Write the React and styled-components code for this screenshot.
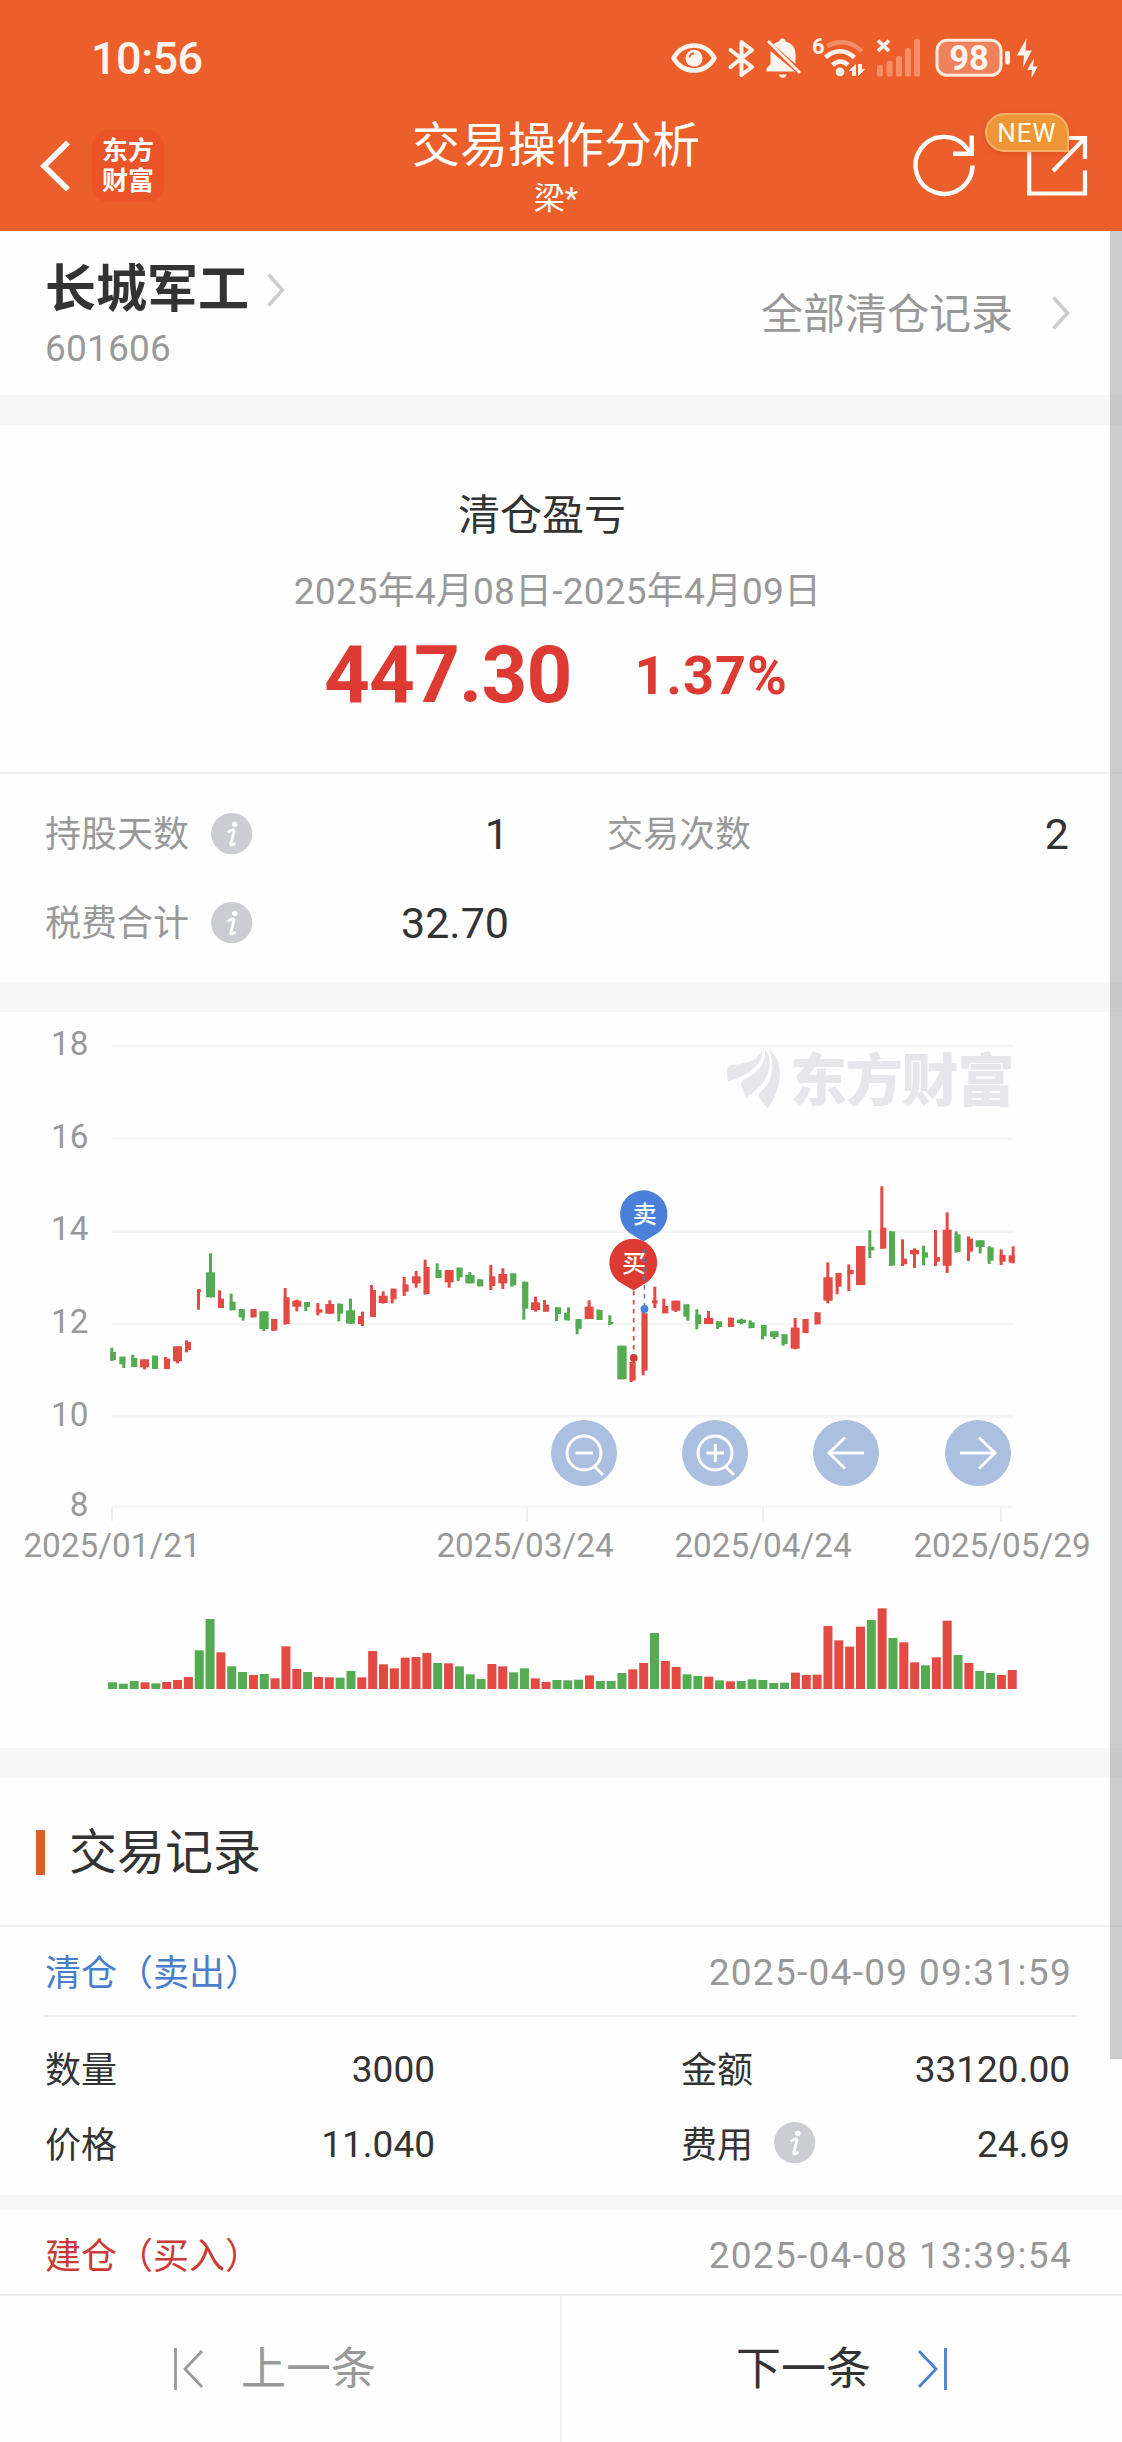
import styled, { createGlobalStyle } from "styled-components";

const GREEN = "#55ab51";
const RED = "#e24a43";

// [direction, body left, body right, body top, body bottom, wick x, high, low]
const candleGroups = [
  {
    x: 270,
    y: 444,
    candles: [
      ["G", 61, 78, 576, 600, 61, 563, 603],
      ["G", 88, 106, 590, 613, 97, 590, 624],
      ["G", 124, 142, 594, 621, 124, 584, 621],
      ["R", 150, 177, 598, 622, 159, 598, 628],
      ["G", 186, 204, 587, 627, 186, 587, 627],
      ["R", 222, 240, 596, 627, 222, 591, 627],
      ["R", 249, 276, 559, 604, 258, 559, 610],
      ["R", 285, 303, 546, 570, 285, 541, 577],
      ["R", 321, 333, 388, 396, 321, 388, 449],
      ["G", 348, 375, 337, 412, 357, 280, 412],
      ["R", 384, 402, 416, 444, 384, 391, 444],
      ["G", 419, 437, 425, 451, 419, 401, 451],
      ["G", 446, 464, 447, 472, 455, 447, 482],
      ["R", 482, 500, 447, 472, 482, 447, 472],
      ["G", 508, 536, 454, 507, 517, 454, 513],
      ["R", 544, 562, 477, 512, 544, 477, 512],
      ["R", 581, 599, 412, 492, 581, 384, 494],
      ["R", 607, 634, 422, 440, 616, 419, 454],
      ["G", 643, 660, 426, 441, 643, 426, 453],
      ["R", 679, 697, 448, 458, 679, 429, 466],
      ["R", 706, 733, 432, 461, 715, 421, 461],
      ["G", 742, 759, 431, 461, 742, 431, 484],
      ["G", 768, 795, 451, 491, 777, 416, 491],
      ["R", 804, 822, 468, 492, 813, 455, 498],
      ["R", 840, 858, 390, 471, 840, 375, 471],
      ["R", 866, 893, 407, 429, 875, 394, 431],
    ],
  },
  {
    x: 1140,
    y: 444,
    candles: [
      ["R", 32, 50, 386, 418, 32, 386, 430],
      ["R", 68, 86, 373, 395, 68, 351, 408],
      ["R", 96, 122, 349, 370, 104, 333, 383],
      ["R", 131, 149, 321, 402, 131, 299, 404],
      ["G", 167, 185, 330, 354, 167, 310, 354],
      ["R", 194, 221, 330, 367, 203, 330, 383],
      ["G", 230, 248, 323, 352, 230, 323, 363],
      ["G", 256, 284, 345, 370, 265, 336, 370],
      ["G", 292, 310, 358, 379, 292, 358, 379],
      ["R", 328, 346, 349, 378, 328, 315, 390],
      ["R", 355, 382, 342, 370, 364, 325, 387],
      ["G", 391, 409, 340, 376, 391, 340, 380],
      ["G", 427, 445, 365, 446, 427, 365, 479],
      ["R", 453, 480, 427, 450, 462, 410, 455],
      ["R", 489, 507, 434, 455, 489, 420, 455],
      ["G", 525, 543, 442, 462, 525, 442, 483],
      ["G", 552, 570, 458, 481, 561, 442, 481],
      ["G", 587, 605, 477, 507, 587, 477, 523],
      ["R", 614, 641, 440, 477, 623, 421, 477],
      ["G", 650, 668, 450, 480, 650, 448, 480],
      ["G", 685, 700, 486, 492, 685, 466, 495],
      ["G", 712, 740, 557, 658, 721, 557, 658],
      ["R", 749, 767, 606, 662, 749, 606, 666],
      ["R", 785, 803, 460, 632, 785, 455, 646],
      ["R", 816, 833, 421, 430, 820, 380, 444],
      ["R", 847, 865, 438, 460, 847, 416, 460],
    ],
  },
  {
    x: 2010,
    y: 24,
    candles: [
      ["R", 4, 31, 842, 872, 13, 842, 876],
      ["G", 40, 58, 853, 890, 49, 853, 902],
      ["G", 76, 94, 884, 912, 76, 868, 928],
      ["R", 102, 130, 894, 912, 111, 873, 912],
      ["G", 138, 156, 904, 921, 138, 904, 927],
      ["R", 174, 192, 893, 921, 174, 893, 921],
      ["G", 201, 228, 899, 909, 210, 896, 913],
      ["G", 236, 254, 907, 924, 236, 901, 925],
      ["G", 273, 290, 915, 949, 273, 915, 958],
      ["G", 300, 326, 934, 951, 308, 934, 957],
      ["G", 335, 353, 943, 972, 335, 943, 977],
      ["R", 362, 389, 923, 986, 371, 894, 988],
      ["R", 398, 416, 897, 939, 398, 897, 939],
      ["R", 434, 452, 877, 913, 434, 877, 913],
      ["R", 460, 488, 772, 842, 469, 727, 850],
      ["R", 497, 515, 759, 800, 497, 759, 823],
      ["R", 532, 551, 750, 762, 532, 733, 813],
      ["R", 558, 586, 678, 795, 567, 678, 795],
      ["G", 595, 613, 680, 691, 595, 631, 714],
      ["R", 631, 649, 623, 686, 631, 499, 686],
      ["G", 657, 675, 634, 737, 657, 634, 737],
      ["R", 693, 711, 716, 733, 693, 658, 738],
      ["R", 720, 747, 690, 703, 729, 685, 744],
      ["G", 756, 774, 697, 713, 756, 677, 736],
      ["R", 792, 810, 711, 725, 792, 630, 738],
      ["R", 818, 845, 629, 737, 827, 577, 759],
      ["G", 854, 872, 643, 696, 854, 634, 698],
      ["R", 891, 909, 656, 695, 891, 649, 723],
      ["G", 917, 944, 661, 681, 926, 661, 700],
      ["G", 953, 971, 682, 722, 953, 679, 732],
      ["R", 989, 1007, 705, 725, 989, 688, 735],
      ["R", 1016, 1034, 706, 728, 1025, 679, 730],
    ],
  },
];

const volumes =
  "G20 G16 G24 R20 G17 R21 R27 R36 G116 G210 R110 G68 G51 R42 G45 R32 R128 R60 G51 R36 R35 G34 G54 R35 " +
  "R114 R74 R62 R94 R96 R108 G78 R77 G68 G44 G30 R75 R68 G50 G62 R32 R21 G27 G26 G28 R41 G24 G24 G48 R59 " +
  "R78 G168 R84 R66 G44 G39 R37 G26 R23 G24 G29 G27 G18 G19 R49 R42 R43 R189 R146 R127 R187 G207 R242 " +
  "G153 R140 R80 G71 R95 R205 G102 R78 G54 G48 R42 R57";

const priceLines = [
  { label: "18", y: 34 },
  { label: "16", y: 126.7 },
  { label: "14", y: 219.4 },
  { label: "12", y: 312 },
  { label: "10", y: 404.7 },
  { label: "8", y: 494.7 },
];

const dateTicks = [
  { label: "2025/01/21", tick: 112, x: 112 },
  { label: "2025/03/24", tick: 527, x: 525 },
  { label: "2025/04/24", tick: 763, x: 763 },
  { label: "2025/05/29", tick: 1001, x: 1002 },
];

const BackIcon = () => (
  <svg width="46" height="60" viewBox="36 136 46 60" fill="none">
    <path d="M68 142.5 44 166l24 23.5" stroke="#fff" strokeWidth="5.5" />
  </svg>
);

const RefreshIcon = () => (
  <svg width="72" height="72" viewBox="908 130 72 72" fill="none">
    <path
      d="M972.5 165.5a28.5 28.5 0 1 1-5.5-17l5 6"
      stroke="#fff"
      strokeWidth="4.4"
    />
    <path d="M971.7 135.500v18.300h-18.500" stroke="#fff" strokeWidth="4.400" />
  </svg>
);

const ShareIcon = () => (
  <svg width="72" height="72" viewBox="1020 130 72 72" fill="none">
    <path
      d="M1050 138h-20.800v55.500h55.800v-23M1062 138h23v21M1053 171l31-32"
      stroke="#fff"
      strokeWidth="4.200"
    />
  </svg>
);

const StatusIcons = () => (
  <>
    <svg width="54" height="44" viewBox="668 36 54 44">
      <path
        d="M673.500 58c5-8.500 12.500-12.500 20.500-12.500s15.500 4 20.500 12.500c-5 8.500-12.500 12.500-20.500 12.500s-15.500-4-20.500-12.500z"
        fill="none"
        stroke="#fff4ee"
        strokeWidth="4.500"
        strokeLinejoin="round"
      />
      <circle cx="694" cy="58.300" r="8.500" fill="#fff4ee" />
      <path
        d="M689.500 57.500a4.500 4.500 0 0 1 4.500-4"
        fill="none"
        stroke="#ed5f2b"
        strokeWidth="1.800"
      />
    </svg>
    <svg width="38" height="44" viewBox="722 36 38 44">
      <path
        d="M730.500 50l21.500 17-10.500 8V42l10.500 8-21.500 17"
        fill="none"
        stroke="#fff4ee"
        strokeWidth="4"
        strokeLinejoin="round"
        strokeLinecap="round"
      />
    </svg>
    <svg width="46" height="44" viewBox="760 36 46 44" fill="#fff4ee">
      <path d="M770.500 51 795 71.500h-28.500v-3l4-4.500z" />
      <path d="M773.500 44.500c2-1.700 3.800-2.700 6-3a3 3 0 0 1 6 0c6.500 1.500 10 6 10 12.500v10z" />
      <path d="M768 41l32 32" stroke="#fff4ee" strokeWidth="2.800" fill="none" />
      <path d="M779 74.500h7.500a3.800 3.800 0 0 1-7.500 0z" />
    </svg>
    <svg width="64" height="60" viewBox="806 28 64 60" fill="none">
      <text
        x="812"
        y="53.500"
        fontSize="22"
        fontWeight="700"
        fontFamily="Roboto"
        fill="#fff4ee"
      >
        6
      </text>
      <g stroke="#fff4ee" strokeWidth="4.500">
        <path d="M827 46c11-6 24-5.500 35 5.500" opacity=".3" />
        <path d="M825.500 57.500c9-8.500 20-8.500 29 0" />
        <path d="M832.500 65c5-4.500 10.500-4.500 15.500 0" />
      </g>
      <circle cx="840" cy="71.800" r="4.400" fill="#fff4ee" />
      <path d="M855.500 64.500v11h-3v-5h-3zM858.500 75.500v-11h3v5h3z" fill="#fff4ee" stroke="#fff4ee" />
    </svg>
    <svg width="58" height="44" viewBox="870 36 58 44">
      <path d="M878 40.500l11 10.500M889 40.500 878 51" stroke="#fff4ee" strokeWidth="3.800" />
      <g fill="#f78d64">
        <rect x="877" y="65" width="6" height="11.500" rx="2" />
        <rect x="886.500" y="61" width="6" height="15.500" rx="2" />
        <rect x="896" y="56" width="6" height="20.500" rx="2" />
        <rect x="905" y="48" width="6" height="28.500" rx="2" />
        <rect x="914" y="39" width="6" height="37.500" rx="2" />
      </g>
    </svg>
    <svg width="86" height="44" viewBox="928 36 86 44">
      <rect
        x="937"
        y="40.300"
        width="64"
        height="35"
        rx="10"
        fill="#f0825b"
        stroke="#ffe9df"
        strokeWidth="3"
      />
      <text
        x="969"
        y="70"
        fontSize="34.500"
        fontWeight="700"
        fontFamily="Roboto"
        textAnchor="middle"
        fill="#fff4ee"
      >
        98
      </text>
      <rect x="1005" y="51" width="5" height="13.500" rx="2" fill="#fff4ee" />
    </svg>
    <svg width="30" height="44" viewBox="1014 36 30 44" fill="#fff4ee">
      <path d="M1026.500 38.500 1017 55.500h7l-1 12 8.800-17h-6.300z" />
      <path d="M1034 58.500l-7 11.500h5l-.5 8 6.300-11.500h-4.800z" />
    </svg>
  </>
);

const ChevronIcon = () => (
  <svg width="18" height="34" viewBox="0 0 18 34" fill="none">
    <path d="M1.500 1.500 15.500 17 1.500 32.500" stroke="#ccc" strokeWidth="3.500" />
  </svg>
);

const InfoIcon = () => (
  <svg width="42" height="42" viewBox="0 0 42 42">
    <circle cx="20.700" cy="20.600" r="20.600" fill="#cccdd2" />
    <circle cx="23.800" cy="11.500" r="2.700" fill="#fff" />
    <path
      d="M16.500 19.500c2-1.500 4-2.500 5.500-2.500 1 0 1.200 1 .9 2L19.800 30.500c-.5 2.500 1.500 2 4.500-.5"
      fill="none"
      stroke="#fff"
      strokeWidth="2.800"
    />
  </svg>
);

const ToolIcon = ({ type }) => (
  <svg width="66" height="66" viewBox="0 0 66 66" fill="none" stroke="#fff" strokeWidth="3">
    {(type === "out" || type === "in") && (
      <>
        <circle cx="33" cy="33" r="17" />
        <path d="M43.500 46.500 52 55M24.500 33h17.500" />
      </>
    )}
    {type === "in" && <path d="M33.300 24v18" />}
    {type === "prev" && <path d="M51 33H17M32 17.500 16 33l16 15.500" />}
    {type === "next" && <path d="M15 33h34M34 17.500 50 33 34 48.500" />}
  </svg>
);

const StepIcon = ({ flip }) => (
  <svg
    width="32"
    height="44"
    viewBox="0 0 32 44"
    fill="none"
    stroke={flip ? "#4a80cc" : "#999"}
    strokeWidth="2.800"
  >
    {flip ? (
      <path d="M3 4l17 18L3 40M29.500 1v42" />
    ) : (
      <path d="M29 4 12 22l17 18M2.500 1v42" />
    )}
  </svg>
);

const Candle = ({ data }) => {
  const [dir, x1, x2, top, bottom, wick, high, low] = data;
  return (
    <g fill={dir === "G" ? GREEN : RED}>
      <rect x={wick} y={high} width="9" height={low - high} />
      <rect x={x1} y={top} width={x2 - x1} height={bottom - top} />
    </g>
  );
};

const PriceChart = () => (
  <ChartSvg width="1122" height="736" viewBox="0 0 1122 736">
    {priceLines.map((line) => (
      <g key={line.label}>
        <rect x="112" y={line.y - 1.500} width="901" height="3" fill="#f6f6f6" />
        <text x="88.500" y={line.y + 9} textAnchor="end">
          {line.label}
        </text>
      </g>
    ))}
    {dateTicks.map((t) => (
      <g key={t.label}>
        <rect x={t.tick - 1} y="495" width="2" height="14" fill="#eee" />
        <text x={t.x} y="545" textAnchor="middle">
          {t.label}
        </text>
      </g>
    ))}

    {/* watermark */}
    <g fill="#e7e6eb">
      <g transform="translate(670 8) scale(.3333)">
        <path d="M174 184c-3-14-3-26-2-36 2-9 8-13 18-14 44-3 76-14 86-44 2 18-4 34-16 46-20 24-46 36-86 48z" />
        <path d="M230 232c-8-12-14-26-17-40 1-8 6-12 16-17 40-20 58-46 57-85 12 12 14 30 12 48-5 40-26 68-68 94z" />
        <path d="M294 266c-10-12-22-24-27-38-1-6 2-9 8-15 34-34 40-76 22-123 24 16 33 42 33 72-1 36-14 70-36 104z" />
      </g>
      <text className="brand" x="790" y="88.500">
        东方财富
      </text>
    </g>

    {candleGroups.map((group) => (
      <g key={group.x} transform={`scale(.33333) translate(${group.x} ${group.y})`}>
        {group.candles.map((c) => (
          <Candle key={c[1]} data={c} />
        ))}
      </g>
    ))}

    {volumes.split(" ").map((v, i) => {
      const h = Number(v.slice(1)) / 3;
      return (
        <rect
          key={i}
          x={108 + i * 10.840}
          y={677 - h}
          width="9"
          height={h}
          fill={v[0] === "G" ? GREEN : RED}
        />
      );
    })}

    {/* sell / buy pins */}
    <path
      d="M643.500 229.500 629.500 221a23.700 23.700 0 1 1 28.500 0z"
      fill="#4a80da"
    />
    <path
      d="M633.700 278.500 618.500 269.500a23.900 23.900 0 1 1 29.500 0z"
      fill="#dc3a32"
    />
    <path d="M633.700 279v64" stroke="#d0524c" strokeWidth="1.800" strokeDasharray="4.500 4.500" />
    <path d="M644.500 237v58" stroke="#5a78c0" strokeWidth="1.500" strokeDasharray="4.500 4.500" />
    <circle cx="633.700" cy="346" r="3.900" fill="#d23c36" />
    <circle cx="644.500" cy="297" r="3.900" fill="#4a80da" />
    <text className="pin" x="644.700" y="211.300">
      卖
    </text>
    <text className="pin" x="634" y="260">
      买
    </text>
  </ChartSvg>
);

const RecordItem = ({ title, time, color, children }) => (
  <Record>
    <RecordHead $color={color}>
      <h3>{title}</h3>
      <time>{time}</time>
    </RecordHead>
    {children}
  </Record>
);

const App = () => {
  return (
    <>
      <GlobalStyle />
      <Screen>
        <Header>
          <StatusBar>
            <Clock>10:56</Clock>
            <StatusRight>
              <StatusIcons />
            </StatusRight>
          </StatusBar>
          <NavBar>
            <NavLeft>
              <BackIcon />
              <AppLogo>
                东方
                <br />
                财富
              </AppLogo>
            </NavLeft>
            <NavTitle>
              <h1>交易操作分析</h1>
              <p>梁*</p>
            </NavTitle>
            <NavRight>
              <RefreshIcon />
              <ShareButton>
                <ShareIcon />
                <NewBadge>NEW</NewBadge>
              </ShareButton>
            </NavRight>
          </NavBar>
        </Header>

        <Content>
          <StockBar>
            <div>
              <StockName>
                长城军工
                <ChevronIcon />
              </StockName>
              <StockCode>601606</StockCode>
            </div>
            <AllRecords>
              <span>全部清仓记录</span>
              <ChevronIcon />
            </AllRecords>
          </StockBar>
          <Band />

          <Profit>
            <ProfitTitle>清仓盈亏</ProfitTitle>
            <ProfitDate>2025年4月08日-2025年4月09日</ProfitDate>
            <ProfitValue>
              <strong>447.30</strong>
              <em>1.37%</em>
            </ProfitValue>
          </Profit>

          <Stats>
            <StatItem>
              <span>持股天数</span>
              <InfoIcon />
              <b>1</b>
            </StatItem>
            <StatItem>
              <span>交易次数</span>
              <b>2</b>
            </StatItem>
            <StatItem>
              <span>税费合计</span>
              <InfoIcon />
              <b>32.70</b>
            </StatItem>
          </Stats>
          <Band />

          <ChartPanel>
            <PriceChart />
            <ChartTools>
              {["out", "in", "prev", "next"].map((type) => (
                <ToolButton key={type}>
                  <ToolIcon type={type} />
                </ToolButton>
              ))}
            </ChartTools>
          </ChartPanel>
          <Band />

          <SectionTitle>交易记录</SectionTitle>
          <RecordItem title="清仓（卖出）" time="2025-04-09 09:31:59" color="#4a7dcb">
            <RecordGrid>
              <RecordCell>
                <span>数量</span>
                <b>3000</b>
              </RecordCell>
              <RecordCell>
                <span>金额</span>
                <b>33120.00</b>
              </RecordCell>
              <RecordCell>
                <span>价格</span>
                <b>11.040</b>
              </RecordCell>
              <RecordCell>
                <span>费用</span>
                <InfoIcon />
                <b>24.69</b>
              </RecordCell>
            </RecordGrid>
          </RecordItem>
          <Band $thin />
          <RecordItem title="建仓（买入）" time="2025-04-08 13:39:54" color="#cb3a34" />
          <ScrollThumb />
        </Content>

        <Footer>
          <FooterButton $disabled>
            <StepIcon />
            <span>上一条</span>
          </FooterButton>
          <FooterButton>
            <span>下一条</span>
            <StepIcon flip />
          </FooterButton>
        </Footer>
      </Screen>
    </>
  );
};

const GlobalStyle = createGlobalStyle`
  * {
    box-sizing: border-box;
    margin: 0;
    padding: 0;
  }
  body {
    background-color: #fff;
    font-family: Roboto, "Noto Sans CJK SC", sans-serif;
    color: #333;
  }
  svg {
    display: block;
    flex-shrink: 0;
  }
`;

const Screen = styled.div`
  width: 1122px;
  height: 2442px;
  display: flex;
  flex-direction: column;
  overflow: hidden;
  background-color: #fefefe;
`;

const Header = styled.header`
  height: 231px;
  flex-shrink: 0;
  background-color: #ec5f2b;
  color: #fff;
`;

const StatusBar = styled.div`
  height: 116px;
  display: flex;
  align-items: center;
  justify-content: space-between;
  padding: 0 78px 0 91px;
`;

const Clock = styled.span`
  font-size: 45px;
  font-weight: 500;
  letter-spacing: -0.5px;
  color: #fff4ee;
`;

const StatusRight = styled.div`
  display: flex;
  align-items: center;
`;

const NavBar = styled.div`
  display: grid;
  grid-template-columns: 1fr auto 1fr;
  height: 115px;
  padding-right: 10px;
`;

const NavLeft = styled.div`
  display: flex;
  align-items: center;
  height: 100px;
  padding-left: 36px;
  gap: 10px;
`;

const AppLogo = styled.div`
  width: 72px;
  height: 72px;
  padding-top: 6px;
  border-radius: 16px;
  background-color: #eb5428;
  font-size: 26px;
  font-weight: 700;
  line-height: 30px;
  text-align: center;
`;

const NavTitle = styled.div`
  padding-top: 2px;
  text-align: center;

  h1 {
    font-size: 48px;
    font-weight: 400;
    line-height: 56px;
  }
  p {
    margin-top: 5px;
    font-size: 31px;
    line-height: 40px;
  }
`;

const NavRight = styled.div`
  display: flex;
  justify-content: flex-end;
  padding: 14px 20px 0 0;
  gap: 40px;
`;

const ShareButton = styled.div`
  position: relative;
`;

const NewBadge = styled.span`
  position: absolute;
  left: -35px;
  top: -17px;
  width: 84px;
  height: 39px;
  border: 2px solid #f5b26b;
  border-radius: 20px 20px 0 20px;
  background-color: #ee9636;
  box-shadow: 0 2px 6px rgba(200, 60, 10, 0.4);
  font-size: 26px;
  line-height: 36px;
  letter-spacing: 1px;
  text-align: center;
  color: #fffbe6;
`;

const Content = styled.main`
  position: relative;
  flex: 1;
  overflow: hidden;
`;

const ScrollThumb = styled.div`
  position: absolute;
  top: 0;
  right: 0;
  width: 12px;
  height: 1828px;
  background-color: rgba(160, 162, 166, 0.55);
`;

const Band = styled.div`
  height: ${({ $thin }) => ($thin ? "15px" : "30px")};
  background-color: #f7f7f7;
`;

const StockBar = styled.section`
  display: flex;
  justify-content: space-between;
  height: 164px;
  padding: 29px 52px 0 45px;
`;

const StockName = styled.h2`
  display: flex;
  align-items: center;
  gap: 18px;
  font-size: 51px;
  font-weight: 700;
  line-height: 60px;
`;

const StockCode = styled.p`
  font-size: 37px;
  line-height: 58px;
  letter-spacing: 0.2px;
  color: #999;
`;

const AllRecords = styled.div`
  display: flex;
  align-items: center;
  height: 106px;
  gap: 39px;
  font-size: 42px;
  line-height: 48px;
  color: #999;

  span {
    padding-top: 3px;
  }
`;

const Profit = styled.section`
  height: 349px;
  padding-top: 61px;
  border-bottom: 2px solid #efefef;
  text-align: center;
`;

const ProfitTitle = styled.h2`
  padding-right: 38px;
  font-size: 42px;
  font-weight: 400;
  line-height: 60px;
`;

const ProfitDate = styled.p`
  margin-top: 16px;
  padding-right: 7px;
  font-size: 37px;
  line-height: 60px;
  letter-spacing: 0.2px;
  color: #999;
`;

const ProfitValue = styled.div`
  display: flex;
  align-items: center;
  justify-content: center;
  gap: 63px;
  height: 100px;
  padding-right: 10px;
  margin-top: 3px;
  color: #dc3a32;

  strong {
    font-size: 80px;
    font-weight: 700;
    letter-spacing: -0.9px;
  }
  em {
    font-size: 54px;
    font-weight: 700;
    font-style: normal;
    letter-spacing: 1px;
  }
`;

const Stats = styled.section`
  display: grid;
  grid-template-columns: 464px 462px;
  column-gap: 98px;
  grid-auto-rows: 89px;
  height: 208px;
  padding: 15px 0 0 45px;
`;

const StatItem = styled.div`
  display: flex;
  align-items: center;
  font-size: 36px;
  line-height: 40px;

  span {
    margin-right: 22px;
    padding-top: 3px;
    color: #999;
  }
  svg {
    margin-top: 1px;
  }
  b {
    margin-left: auto;
    font-size: 43px;
    font-weight: 400;
  }
`;

const ChartPanel = styled.section`
  position: relative;
  height: 736px;
`;

const ChartSvg = styled.svg`
  text {
    font-size: 33.300px;
    fill: #999;
  }
  .brand {
    font-size: 57px;
    font-weight: 900;
    letter-spacing: -1.200px;
    fill: #e7e6eb;
  }
  .pin {
    font-size: 24px;
    font-weight: 500;
    text-anchor: middle;
    fill: #fff;
  }
`;

const ChartTools = styled.div`
  position: absolute;
  top: 408px;
  left: 551px;
  display: flex;
  gap: 65.200px;
`;

const ToolButton = styled.button`
  width: 66px;
  height: 66px;
  border: none;
  border-radius: 50%;
  background-color: #abc0e0;
`;

const SectionTitle = styled.h2`
  display: flex;
  align-items: center;
  height: 149px;
  padding: 3px 0 0 36px;
  border-bottom: 2px solid #efefef;
  font-size: 48px;
  font-weight: 400;
  line-height: 54px;

  &::before {
    content: "";
    width: 9px;
    height: 45px;
    margin: -1px 24px 0 0;
    background-color: #d9622b;
  }
`;

const Record = styled.article`
  padding-left: 45px;
`;

const RecordHead = styled.div`
  display: flex;
  align-items: center;
  justify-content: space-between;
  width: 1032px;
  height: 90px;
  padding: 2px 5px 0 0;
  border-bottom: 2px solid #efefef;

  h3 {
    padding-top: 3px;
    font-size: 36px;
    font-weight: 400;
    line-height: 40px;
    color: ${({ $color }) => $color};
  }
  time {
    font-size: 37px;
    letter-spacing: 1.3px;
    color: #999;
  }
`;

const RecordGrid = styled.div`
  display: grid;
  grid-template-columns: 390px 389px;
  column-gap: 246px;
  grid-auto-rows: 75px;
  height: 178px;
  padding-top: 15px;
`;

const RecordCell = styled.div`
  display: flex;
  align-items: center;
  font-size: 36px;
  line-height: 40px;

  svg {
    margin-top: -3px;
  }
  span {
    margin-right: 21px;
    padding-top: 2px;
  }
  b {
    margin-left: auto;
    font-size: 37px;
    font-weight: 400;
  }
`;

const Footer = styled.footer`
  display: grid;
  grid-template-columns: 560px 562px;
  flex-shrink: 0;
  height: 148px;
  border-top: 2px solid #ececec;
`;

const FooterButton = styled.div`
  display: flex;
  align-items: center;
  justify-content: center;
  gap: ${({ $disabled }) => ($disabled ? "36px" : "45px")};
  padding-right: ${({ $disabled }) => ($disabled ? "11px" : "0")};
  border-left: ${({ $disabled }) => ($disabled ? "none" : "2px solid #f0f0f0")};
  font-size: 45px;
  line-height: 48px;
  color: ${({ $disabled }) => ($disabled ? "#999" : "#333")};

  span {
    padding-top: 2px;
  }
`;

export default App;
